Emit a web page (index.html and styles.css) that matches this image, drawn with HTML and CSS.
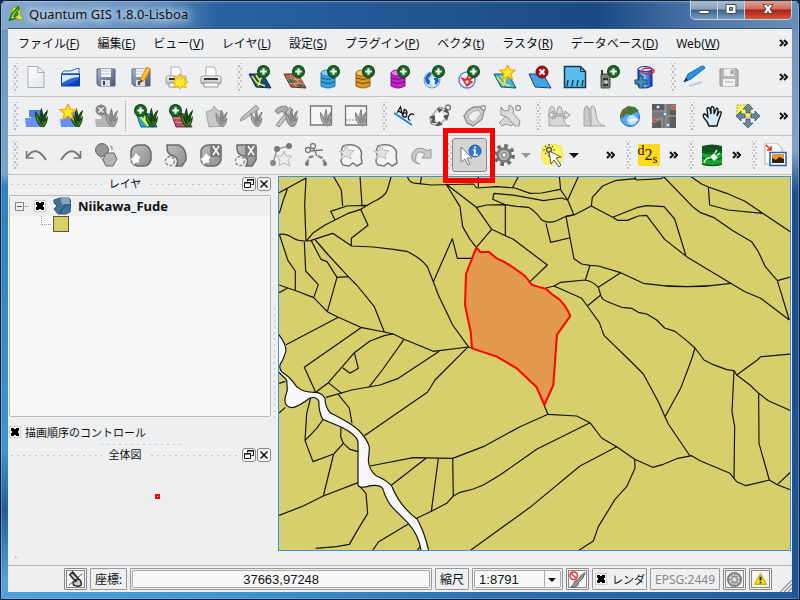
FILE: index.html
```html
<!DOCTYPE html>
<html lang="ja">
<head>
<meta charset="utf-8">
<title>Quantum GIS 1.8.0-Lisboa</title>
<link rel="stylesheet" href="styles.css">
</head>
<body>
<svg class="sprite" aria-hidden="true">
  <defs>
    <linearGradient id="g-floppy" x2="1" y2="1"><stop offset="0" stop-color="#a9b6d6"/><stop offset="1" stop-color="#4d5570"/></linearGradient>
    <linearGradient id="g-paper" x2="1" y2="1"><stop offset="0" stop-color="#fff"/><stop offset="1" stop-color="#dfe6ef"/></linearGradient>
    <linearGradient id="g-blue" x2="1" y2="0"><stop offset="0" stop-color="#0a3fc0"/><stop offset=".4" stop-color="#7ec4ff"/><stop offset="1" stop-color="#0a38b0"/></linearGradient>
    <linearGradient id="g-grey" x2="1" y2="1"><stop offset="0" stop-color="#bdbdbd"/><stop offset="1" stop-color="#8f8f8f"/></linearGradient>
    <radialGradient id="g-globe" cx=".6" cy=".65"><stop offset="0" stop-color="#fff"/><stop offset=".5" stop-color="#8ac8fa"/><stop offset="1" stop-color="#1e62c8"/></radialGradient>
    <linearGradient id="g-printer" x2="0" y2="1"><stop offset="0" stop-color="#fff"/><stop offset="1" stop-color="#b5b5b5"/></linearGradient>
  </defs>
  <symbol id="badge" viewBox="0 0 12 12"><circle cx="6" cy="6" r="5.500" fill="#1b6b24" stroke="#0d4413"/><path d="M6 3v6M3 6h6" stroke="#fff" stroke-width="2"/></symbol>
  <symbol id="star" viewBox="0 0 16 16"><path d="M8 .8l2 4.800 5.200.2-4 3.400 1.400 5.200L8 11.600l-4.600 2.800 1.400-5.200-4-3.400 5.200-.2z" fill="#ffee22" stroke="#f2a60c" stroke-width="1.200"/></symbol>
  <symbol id="grass" viewBox="0 0 12 18"><path d="M5 17Q0 12 .5 4Q4 9 5 13Q4 5 6 1Q7.500 7 7 12Q8 6 11.500 3Q10 8 8.500 13L11.500 9Q11 15 8 17.500Z" fill="#4f8a22" stroke="#123d0c"/><path d="M3 8l3 8M6 5v9M9 7l-2 9" stroke="#0d3d10" fill="none"/></symbol>
  <symbol id="grass-off" viewBox="0 0 12 18"><path d="M5 17Q0 12 .5 4Q4 9 5 13Q4 5 6 1Q7.500 7 7 12Q8 6 11.500 3Q10 8 8.500 13L11.500 9Q11 15 8 17.500Z" fill="#adadad" stroke="#808080"/><path d="M3 8l3 8M6 5v9M9 7l-2 9" stroke="#888" fill="none"/></symbol>
  <symbol id="floppy" viewBox="0 0 24 24"><path d="M3 4h18v17H5l-2-2z" fill="url(#g-floppy)" stroke="#59617a"/><path d="M7 4h10v8H7z" fill="#f4f6fb"/><path d="M7 6h10M7 9h10" stroke="#b9c4d8"/><path d="M7 15h9v6H7z" fill="#dce0e8"/><path d="M9 16h2v4H9z" fill="#3c4254"/></symbol>
  <symbol id="printer" viewBox="0 0 24 24"><path d="M7 12V2h8l2 3v7z" fill="#fff" stroke="#aaa"/><path d="M2 13q0-2 2-2h16q2 0 2 2v5q0 1-2 1H4q-2 0-2-1z" fill="url(#g-printer)" stroke="#999"/><path d="M5 14h14" stroke="#333" stroke-width="2"/><path d="M5 18h14v4H5z" fill="#f7f7f7" stroke="#999"/></symbol>

  <symbol id="i-new" viewBox="0 0 24 24"><path d="M4 1.500h10l6 6v15H4z" fill="url(#g-paper)" stroke="#a6adb5"/><path d="M14 1.500l6 6h-6z" fill="#fff" stroke="#a6adb5"/></symbol>
  <symbol id="i-open" viewBox="0 0 24 24"><path d="M3 8l2-2h6l9-3v6H3z" fill="#eaf2ff" stroke="#3567c4"/><path d="M2.500 9h18v12h-18z" fill="#2464dc" stroke="#0d3da8"/><path d="M3 10h17v2Q12 12 3 18z" fill="#d4ebff"/><path d="M4 21Q14 18 20 14v7z" fill="#0b3eb0"/></symbol>
  <symbol id="i-saveas" viewBox="0 0 24 24"><use href="#floppy"/><path d="M11 18l1-5 6-11 3.500 2-6 11z" fill="#ffc229" stroke="#e38610"/><path d="M11 18l.7-3.500 2.300 1.300z" fill="#704214"/></symbol>
  <symbol id="i-print-new" viewBox="0 0 24 24"><use href="#printer"/><path d="M16 9l1.500 4.500L22 11l-1.500 4.500 3.500 1.500-3.500 1.500 2 4.500-4.500-2-2 3-2-3-4.500 1.500 2-4-3-1.500 3-1.500-1.500-4 4 2z" fill="#ffea2a" stroke="#f5a510"/></symbol>
  <symbol id="i-vector" viewBox="0 0 24 24"><path d="M1 9l14 0 8 14-15-1z" fill="#174b80" stroke="#0c2c52"/><path d="M4 11l5 7 8 3M8 10l4 6-2 5M14 12l-3 4" stroke="#e8ee36" stroke-width="1.600" fill="none"/><use href="#badge" x="9" y="0" width="13" height="13"/></symbol>
  <symbol id="i-raster" viewBox="0 0 24 24"><path d="M1 9l14 0 8 14-15-1z" fill="#b0605d" stroke="#5e2c25"/><path d="M7 10l6 12M11 11l7 11M4 14l15 1M6 18l15 1" stroke="#d6a578" fill="none"/><path d="M5 14l5 .3 2 3.700-5-.2zM14 19l5 .3 2 3-5-.3z" fill="#397342"/><use href="#badge" x="9" y="0" width="13" height="13"/></symbol>
  <symbol id="i-postgis" viewBox="0 0 24 24"><path d="M3 8v13q7 4 14 0V8z" fill="#38a0dc" stroke="#1a76ae"/><ellipse cx="10" cy="8" rx="7" ry="3" fill="#86cdf2" stroke="#2586bd"/><path d="M3 13q7 3 14 0M3 17q7 3 14 0" stroke="#126094" fill="none"/><use href="#badge" x="9" y="0" width="13" height="13"/></symbol>
  <symbol id="i-spatialite" viewBox="0 0 24 24"><path d="M3 8v13q7 4 14 0V8z" fill="#d99626" stroke="#97600c"/><ellipse cx="10" cy="8" rx="7" ry="3" fill="#f1c372" stroke="#a26c12"/><path d="M3 13q7 3 14 0M3 17q7 3 14 0" stroke="#74480a" fill="none"/><use href="#badge" x="9" y="0" width="13" height="13"/></symbol>
  <symbol id="i-mssql" viewBox="0 0 24 24"><path d="M3 8v13q7 4 14 0V8z" fill="#c422c8" stroke="#870e8b"/><ellipse cx="10" cy="8" rx="7" ry="3" fill="#e47be6" stroke="#8d168f"/><path d="M3 13q7 3 14 0M3 17q7 3 14 0" stroke="#700c75" fill="none"/><use href="#badge" x="9" y="0" width="13" height="13"/></symbol>
  <symbol id="i-wms" viewBox="0 0 24 24"><circle cx="9" cy="15" r="8" fill="#bfe0fa" stroke="#6d9ccc"/><path d="M2 13q3-6 7-5l-2 4-2 1 2 3-1 4q-4-2-4-7zM11 13l4 0 1 3-3 4-2-3z" fill="#1f64b5"/><path d="M8 15l3 1-1 4" stroke="#fff" stroke-width="2" fill="none"/><use href="#badge" x="9" y="0" width="13" height="13"/></symbol>
  <symbol id="i-wfs" viewBox="0 0 24 24"><circle cx="9" cy="15" r="8" fill="#edf4ff" stroke="#5b84da" stroke-width="1.500"/><path d="M3 13l5 2 3-5M4 13l5 8 5-4-5-3 6-1M9 21l5-9" fill="none" stroke="#e52731" stroke-width="1.500"/><use href="#badge" x="9" y="0" width="13" height="13"/></symbol>
  <symbol id="i-newvector" viewBox="0 0 24 24"><path d="M1 9l14 0 8 14-15-1z" fill="#4cb2d8" stroke="#175377"/><path d="M4 12l5 6 8 3M8 11l4 5-2 5M14 12l-3 3" stroke="#e8ee36" stroke-width="1.600" fill="none"/><use href="#star" x="6" y="-1" width="17" height="17"/></symbol>
  <symbol id="i-remove" viewBox="0 0 24 24"><path d="M1 9l14 0 8 14-16-1z" fill="#42a4e2" stroke="#1d4468"/><circle cx="14" cy="7" r="6" fill="#a31420" stroke="#620810"/><path d="M11.500 4.500l5 5m0-5l-5 5" stroke="#fff" stroke-width="2"/></symbol>
  <symbol id="i-gpx" viewBox="0 0 24 24"><path d="M1.500 1.500h16l5 5v16h-21z" fill="#5bbdec" stroke="#17374b" stroke-width="1.500"/><path d="M17.500 1.500v5h5" fill="none" stroke="#17374b"/><path d="M5 15l-1 6M10 15l-1 6M15 15l-1 6M20 15l-1 6" stroke="#153d56" stroke-width="1.500"/></symbol>
  <symbol id="i-gps" viewBox="0 0 24 24"><rect x="3" y="9" width="9" height="14" rx="1" fill="#798379" stroke="#444"/><path d="M4 5v5M5 14h5M5 20h5" stroke="#333" stroke-width="2"/><circle cx="8" cy="17" r="1.500" fill="#cfd6cf"/><use href="#badge" x="9" y="0" width="13" height="13"/></symbol>
  <symbol id="i-oracle" viewBox="0 0 24 24"><path d="M5 4v17q7 4 14 0V4z" fill="url(#g-blue)" stroke="#092d95"/><ellipse cx="12" cy="4" rx="7" ry="2.500" fill="#cfe8ff" stroke="#0b3cac"/><ellipse cx="15" cy="6" rx="6" ry="3" fill="none" stroke="#ed1c24" stroke-width="1.500"/><path d="M6 11h4v4h4v4h-4v4H6v-4H2v-4h4z" fill="#478caf" stroke="#174f70"/></symbol>
  <symbol id="i-pencil" viewBox="0 0 24 24"><path d="M2 17l4-8L20 1q3 0 3 2L9 14z" fill="#2d8fe0" stroke="#1673bd"/><path d="M2 17l2-4 2 2z" fill="#123"/><path d="M7 21l13-4" stroke="#c4cbd1" stroke-width="2"/></symbol>
  <symbol id="i-save-off" viewBox="0 0 24 24"><path d="M3 4h17l1 2v15H3z" fill="#b5b5b5" stroke="#919191"/><path d="M7 4h10v7H7z" fill="#eee"/><path d="M6 14h12v7H6z" fill="#f2f2f2"/><path d="M14 5h2v4h-2zM8 17h8" stroke="#aaa" fill="#999"/></symbol>

  <symbol id="i-grass1" viewBox="0 0 24 24"><path d="M1 14h6V7h11l3 5v11H2z" fill="#6691f4"/><path d="M5 6h12v7H5z" fill="#4f80df"/><use href="#grass" x="11" y="4" width="13" height="19"/></symbol>
  <symbol id="i-grass2" viewBox="0 0 24 24"><path d="M1 15h6V8h11l3 5v10H2z" fill="#6691f4"/><use href="#grass" x="11" y="4" width="13" height="19"/><use href="#star" x="0" y="-1" width="18" height="18"/></symbol>
  <symbol id="i-grass3" viewBox="0 0 24 24"><path d="M1 15h6V10h11l3 4v9H2z" fill="#b6b6b6"/><use href="#grass-off" x="11" y="4" width="13" height="19"/><circle cx="7" cy="6" r="5.500" fill="#858585"/><path d="M4.500 3.500l5 5m0-5l-5 5" stroke="#eee" stroke-width="1.600"/></symbol>
  <symbol id="i-grass4" viewBox="0 0 24 24"><path d="M2 9l14 1 7 13H7z" fill="#29a7c7" stroke="#0f5f80"/><path d="M6 12l8 10M12 10l-2 7 5 2" stroke="#f1f23e" stroke-width="2" fill="none"/><use href="#grass" x="11" y="4" width="13" height="19"/><use href="#badge" x="0" y="0" width="13" height="13"/></symbol>
  <symbol id="i-grass5" viewBox="0 0 24 24"><path d="M2 9l14 1 7 13H7z" fill="#b94d68" stroke="#69364b"/><path d="M4 14l14 1M6 18l14 1" stroke="#e09277"/><use href="#grass" x="11" y="4" width="13" height="19"/><use href="#badge" x="0" y="0" width="13" height="13"/></symbol>
  <symbol id="i-grass6" viewBox="0 0 24 24"><path d="M2 8l6-2 2-4 3 4 6 2 1 14-15 1z" fill="#c8c8c8" stroke="#a5a5a5"/><use href="#grass-off" x="11" y="5" width="13" height="18"/></symbol>
  <symbol id="i-grass7" viewBox="0 0 24 24"><path d="M1 17l2-4L17 1l3 4L6 15z" fill="#bfbfbf" stroke="#929292"/><use href="#grass-off" x="11" y="5" width="13" height="18"/></symbol>
  <symbol id="i-grass8" viewBox="0 0 24 24"><path d="M1 7q2-5 11-5l3 3-3 1 5 6-3 2-6-7-4 3z" fill="#aaa" stroke="#858585"/><path d="M2 21L16 3l3 3L5 23z" fill="#c4c4c4" stroke="#8c8c8c"/><use href="#grass-off" x="11" y="4" width="13" height="19"/></symbol>
  <symbol id="i-grass9" viewBox="0 0 24 24"><path d="M1.500 2h21v19h-21z" fill="#f5f5f5" stroke="#777" stroke-width="1.300"/><use href="#grass-off" x="11" y="4" width="12" height="19"/></symbol>
  <symbol id="i-grass10" viewBox="0 0 24 24"><path d="M1.500 2h21v19h-21z" fill="#f5f5f5" stroke="#777" stroke-width="1.300"/><path d="M2 16h14" stroke="#888" stroke-dasharray="2 1"/><use href="#grass-off" x="11" y="4" width="12" height="19"/></symbol>
  <symbol id="i-tag1" viewBox="0 0 24 24"><circle cx="20" cy="3.500" r="2.500" fill="none" stroke="#777" stroke-width="1.300"/><path d="M2 14L11 3l8 2 2 6-10 11-8-2z" fill="#e2e2e2" stroke="#888"/><circle cx="11.500" cy="12.500" r="4.500" fill="#fff"/><path d="M9 4l6 1-4 4zM1 13l6-2v6zM21 10l-2 7-4-5zM7 22l4-5 4 4zM19 4l2 6-6-3zM3 19l1-4 5 4z" fill="#555"/></symbol>
  <symbol id="i-tag2" viewBox="0 0 24 24"><circle cx="20" cy="4" r="2.500" fill="none" stroke="#999" stroke-width="1.300"/><path d="M1 12Q7 1 17 3l4 4-2 8-9 7-6-3z" fill="#ccc" stroke="#909090" stroke-width="1.400"/><path d="M5 12q5-6 10-6l3 4-7 8-5-2z" fill="#f0f0f0" stroke="#aaa"/></symbol>
  <symbol id="i-tag3" viewBox="0 0 24 24"><circle cx="20" cy="4" r="2.500" fill="none" stroke="#999" stroke-width="1.300"/><path d="M1 19l8-8 6 2 3 5-5 4-5-2-4 2z" fill="#d5d5d5" stroke="#9a9a9a"/><path d="M3 3l3 4 5-1V1q6 2 4 8l7 8-1 5-4 0-8-9-6-2z" fill="#dcdcdc" stroke="#8f8f8f"/></symbol>
  <symbol id="i-hist1" viewBox="0 0 24 24"><path d="M2 22V6q3-8 6 0v9L11 3q4-3 5 8t7 11z" fill="#d7d7d7" stroke="#a2a2a2"/><path d="M1 11l5-4v3h12V7l5 4-5 4v-3H6v3z" fill="#e3e3e3" stroke="#8e8e8e"/></symbol>
  <symbol id="i-hist2" viewBox="0 0 24 24"><path d="M2 22V6q2-7 5-2l2 18z" fill="#c8c8c8" stroke="#a2a2a2"/><path d="M9 22V3q4-4 5 7t9 12z" fill="#dadada" stroke="#a2a2a2"/></symbol>
  <symbol id="i-earth" viewBox="0 0 24 24"><circle cx="13" cy="13" r="9.500" fill="#58a7f2" stroke="#276ac0"/><circle cx="15" cy="16" r="5" fill="#b9e2ff"/><path d="M3 12l2-6 6-4 7 1 4 4-5 2-3 2-5-1-3 4z" fill="#3e7936"/><path d="M3 12l4-7 5-2-2 4-4 2-1 5z" fill="#8b6237"/><path d="M13 17q4-3 8-1" stroke="#fff" stroke-width="2" fill="none"/></symbol>
  <symbol id="i-georef" viewBox="0 0 24 24"><path d="M0 0h24v24H0z" fill="#777"/><path d="M0 0h13v8H0zM18 6h6v18h-6zM0 17h10v7H0z" fill="#5e5e5e"/><path d="M0 7h13V0M14 0v24M0 17l10-3v10M14 12h10" fill="none" stroke="#949494" stroke-width="1.500"/><g fill="#fff" stroke="#5a8be0"><circle cx="6" cy="3" r="1.600"/><circle cx="13" cy="10" r="1.600"/><circle cx="16" cy="21" r="1.600"/></g><path d="M20 2h3v3h-3zM1 15h3v3H1z" fill="#e81818" stroke="#fbb" stroke-width=".5"/></symbol>
  <symbol id="i-hand" viewBox="0 0 24 24"><path d="M8 22q-1-4-5-8-2-4 1-4l3 3-1-8q1-3 3 0l1 5V4q1-3 3 0v6l2-5q2-2 2 1l-1 6 2-4q3-1 2 2l-3 8-1 4z" fill="#d3ecfb" stroke="#111" stroke-width="1.300"/></symbol>
  <symbol id="i-pan" viewBox="0 0 24 24"><path d="M1 1h14v12H1z" fill="#fff25b" stroke="#bfa927" stroke-dasharray="2 1"/><path d="M12 0l5 5h-3v4h-4V5H7zM24 12l-5 5v-3h-4v-4h4V7zM12 24l-5-5h3v-4h4v4h3zM0 12l5-5v3h4v4H5v3z" fill="#688a9f" stroke="#375567" stroke-width=".8"/></symbol>
  <symbol id="i-label" viewBox="0 0 24 24"><g fill="none" stroke="#111" stroke-width="1.300"><path d="M4 9l3.500-6 2 8M5 7l3.500 1.600M11.500 5l-1.800 7 2 1.200q3-.6 1.600-3.200q2.400-1.500-1.800-5M11.300 8.500l2 1M21 11q-3-2.500-5 1t1.500 4.500"/></g><path d="M1 9l18 12" stroke="#1f80ee" stroke-width="2"/></symbol>

  <symbol id="i-undo" viewBox="0 0 24 24"><path d="M3 14Q12 1 22 17" fill="none" stroke="#777" stroke-width="2"/><path d="M2.500 8v7h7" fill="none" stroke="#777" stroke-width="1.600"/></symbol>
  <symbol id="i-redo" viewBox="0 0 24 24"><path d="M21 14Q12 1 2 17" fill="none" stroke="#777" stroke-width="2"/><path d="M21.500 8v7h-7" fill="none" stroke="#777" stroke-width="1.600"/></symbol>
  <symbol id="i-simplify" viewBox="0 0 24 24"><circle cx="8" cy="7" r="6.500" fill="#969696" stroke="#686868"/><path d="M12 10h8l3 6-4 7h-7l-3-6z" fill="#b5b5b5" stroke="#686868"/><path d="M16 3q3 0 2 4M5 12l6 8" stroke="#777" fill="none"/></symbol>
  <symbol id="i-ring" viewBox="0 0 24 24"><path d="M2 8q1-5 7-6h7q6 3 6 9v6q-2 6-7 6H8q-6-2-6-7z" fill="url(#g-grey)" stroke="#6a6a6a" stroke-width="1.500"/><path d="M7 9l2 3 3 2-2 3 1 3-4 0-3 2-1-4-2-2 3-2z" fill="#fff" stroke="#999" stroke-width=".8"/></symbol>
  <symbol id="i-part" viewBox="0 0 24 24"><path d="M3 2h12q8 4 7 15l-4 6h-6q4-7-2-10Q2 12 3 2z" fill="url(#g-grey)" stroke="#6a6a6a" stroke-width="1.500"/><circle cx="6" cy="18" r="4.500" fill="#f2f2f2" stroke="#8a8a8a" stroke-width="1.500" stroke-dasharray="3 1.500"/></symbol>
  <symbol id="i-ringx" viewBox="0 0 24 24"><use href="#i-ring"/><rect x="11" y="1" width="12" height="13" rx="3" fill="#7b7b7b"/><path d="M14 3l6 9m0-9l-6 9" stroke="#fff" stroke-width="1.500"/></symbol>
  <symbol id="i-partx" viewBox="0 0 24 24"><use href="#i-part"/><rect x="11" y="1" width="12" height="13" rx="3" fill="#7b7b7b"/><path d="M14 3l6 9m0-9l-6 9" stroke="#fff" stroke-width="1.500"/></symbol>
  <symbol id="i-reshape" viewBox="0 0 24 24"><path d="M4 20L8 6l12-3" stroke="#999" stroke-width="1.500" fill="none"/><circle cx="8" cy="6" r="3" fill="#777"/><circle cx="20" cy="3" r="3" fill="#777"/><circle cx="4" cy="20" r="3" fill="#888"/><path d="M15 8l2 5 6 0-4 4 2 6-6-3-5 3 1-6-4-4 6 0z" fill="#ededed" stroke="#b5b5b5"/></symbol>
  <symbol id="i-split" viewBox="0 0 24 24"><path d="M2 21l4-7 5-1M14 13l4 2 4 6" fill="none" stroke="#888" stroke-width="2.500" stroke-dasharray="5 1.500"/><path d="M5 8l14-1M9 4l4 9" stroke="#777" stroke-width="1.500"/><circle cx="4" cy="7" r="2.500" fill="#eee" stroke="#777" stroke-width="1.300"/><circle cx="9" cy="3" r="2.500" fill="#eee" stroke="#777" stroke-width="1.300"/><circle cx="21" cy="21" r="2" fill="#777"/><circle cx="3" cy="21" r="2" fill="#777"/></symbol>
  <symbol id="i-merge" viewBox="0 0 24 24"><path d="M4 3q9-3 15 1 5 4 3 9l1 7-5 3-4-3-4 3-6-1q-4-4 0-8-3-5 0-11z" fill="#f4f4f4" stroke="#777" stroke-width="1.500"/><path d="M7 2l2 5 6 1-4 3 1 5-5-3-5 3 2-5-4-3h5z" fill="#e3e3e3" stroke="#bbb"/></symbol>
  <symbol id="i-rotate" viewBox="0 0 24 24"><path d="M11 21Q1 20 3 11 8 1 19 8l3-2v9h-9l3-4Q9 6 7 13t4 8z" fill="#c9c9c9" stroke="#999"/></symbol>
  <symbol id="i-identify" viewBox="0 0 24 24"><circle cx="17" cy="8" r="6" fill="#2f79cc" stroke="#1b56a4"/><path d="M15 7h2v5m-2 0h5M17 3.500v2" stroke="#fff" stroke-width="1.700" fill="none"/><path d="M3 4v15l4-3 3 6 2-1-3-6h5z" fill="#fff" stroke="#777"/></symbol>
  <symbol id="i-gear" viewBox="0 0 24 24"><circle cx="12" cy="12" r="9" fill="none" stroke="#6a6a6a" stroke-width="4" stroke-dasharray="3.500 3.569"/><circle cx="12" cy="12" r="6.500" fill="#b5b5b5" stroke="#777" stroke-width="2.500"/><circle cx="12" cy="12" r="2.500" fill="#eee" stroke="#6e6e6e"/></symbol>
  <symbol id="i-select" viewBox="0 0 24 24"><path d="M3 3l9-2 9 2 2 10-3 8-15 0-4-8z" fill="#fff25f" stroke="#f2e648"/><circle cx="9" cy="7" r="2.500" fill="#eee06a" stroke="#555" stroke-width="1.300"/><path d="M9 1v2M9 11v3M3 7h2M13 7h2M5 3l1 1M13 3l-1 1M5 11l1-1" stroke="#555" stroke-width="1.200"/><path d="M9 8l12 6-5 1 5 7-2 2-5-7-3 4z" fill="#fff" stroke="#555"/></symbol>
  <symbol id="i-green" viewBox="0 0 24 24"><path d="M2 3v18q10 3 20 0V3z" fill="#12a832"/><path d="M2 3q10-3 20 0v5q-10 3-20 0z" fill="#144f20"/><path d="M2 9q10 3 20 0M2 15q10 3 20 0M2 21q10 3 20 0" stroke="#06601c" stroke-width="1.500" fill="none"/><path d="M10 14l4-4 4 5-4 3z" fill="#eee"/><path d="M10 15q-5 0-6 5M15 10l2-3M17 12l3-2" fill="none" stroke="#dff5d0" stroke-width="1.500"/></symbol>
  <symbol id="i-image" viewBox="0 0 24 24"><path d="M2 0h12l5 5v16H2z" fill="#fff" stroke="#a7adb4"/><path d="M3 2l5 5m0-4v4H4" fill="none" stroke="#e62222" stroke-width="1.500"/><path d="M7 9.500h16v13H7z" fill="#fff" stroke="#1e63c6" stroke-width="1.500"/><path d="M9 11h12v9H9z" fill="#e59a22"/><path d="M9 20v-5l4 2 3-3 5 2v4z" fill="#332009"/></symbol>
  <symbol id="i-float" viewBox="0 0 12 12"><path d="M4.500 3.500v-2h6v5h-2M4.500 2h6M1.500 4.500h6v5h-6zM1.500 5h6" fill="none" stroke="#111"/></symbol>
  <symbol id="i-close" viewBox="0 0 12 12"><path d="M2.500 2.500l7 7m0-7l-7 7" stroke="#111" stroke-width="1.500"/></symbol>
</svg>

<main class="window">
  <header class="titlebar">
    <svg class="logo" viewBox="0 0 16 16"><path d="M5 2q5-3 8 0l-1 6 3 5-4 1-2-2-5 2q-3-5 1-12z" fill="#d8e746" stroke="#8ba32a"/><path d="M1 15l3-7 6-7 1 2-5 7q3 1 4-3M2 14l6-2" fill="none" stroke="#187519" stroke-width="1.500"/></svg>
    <h1>Quantum GIS 1.8.0-Lisboa</h1>
    <div class="controls">
      <button aria-label="最小化"><svg viewBox="0 0 16 12"><path d="M3 7.500h10v3H3z" fill="#fff" stroke="#444c5c"/></svg></button>
      <button aria-label="最大化"><svg viewBox="0 0 16 12"><path d="M3 1.500h10v9H3zM6.500 4.500v3h3v-3z" fill="#fff" fill-rule="evenodd" stroke="#444c5c"/></svg></button>
      <button class="exit" aria-label="閉じる"><svg viewBox="0 0 16 12"><path d="M3 1.500h3.500L8 3.500l1.500-2H13L10 6l3 4.500H9.500L8 8.500l-1.500 2H3L6 6z" fill="#fff" stroke="#5d3a40"/></svg></button>
    </div>
  </header>

  <div class="client">
    <nav class="menubar">
      <button>ファイル(<u>F</u>)</button><button>編集(<u>E</u>)</button><button>ビュー(<u>V</u>)</button><button>レイヤ(<u>L</u>)</button><button>設定(<u>S</u>)</button><button>プラグイン(<u>P</u>)</button><button>ベクタ(<u>t</u>)</button><button>ラスタ(<u>R</u>)</button><button>データベース(<u>D</u>)</button><button>Web(<u>W</u>)</button>
      <button class="more end" aria-label="その他"><svg viewBox="0 0 9 8"><path d="M1 1l3 3-3 3M5 1l3 3-3 3"/></svg></button>
    </nav>

    <div class="toolbar">
      <i class="grip"></i>
      <button class="tool" aria-label="新規"><svg><use href="#i-new"/></svg></button>
      <button class="tool" aria-label="開く"><svg><use href="#i-open"/></svg></button>
      <button class="tool" aria-label="保存"><svg><use href="#floppy"/></svg></button>
      <button class="tool" aria-label="名前を付けて保存"><svg><use href="#i-saveas"/></svg></button>
      <button class="tool" aria-label="新規印刷"><svg><use href="#i-print-new"/></svg></button>
      <button class="tool" aria-label="印刷"><svg><use href="#printer"/></svg></button>
      <i class="grip"></i>
      <button class="tool" aria-label="ベクタ追加"><svg><use href="#i-vector"/></svg></button>
      <button class="tool" aria-label="ラスタ追加"><svg><use href="#i-raster"/></svg></button>
      <button class="tool" aria-label="PostGIS追加"><svg><use href="#i-postgis"/></svg></button>
      <button class="tool" aria-label="SpatiaLite追加"><svg><use href="#i-spatialite"/></svg></button>
      <button class="tool" aria-label="MSSQL追加"><svg><use href="#i-mssql"/></svg></button>
      <button class="tool" aria-label="WMS追加"><svg><use href="#i-wms"/></svg></button>
      <button class="tool" aria-label="WFS追加"><svg><use href="#i-wfs"/></svg></button>
      <button class="tool" aria-label="新規レイヤ"><svg><use href="#i-newvector"/></svg></button>
      <button class="tool" aria-label="レイヤ削除"><svg><use href="#i-remove"/></svg></button>
      <button class="tool" aria-label="テキスト"><svg><use href="#i-gpx"/></svg></button>
      <button class="tool" aria-label="GPS"><svg><use href="#i-gps"/></svg></button>
      <button class="tool" aria-label="Oracle"><svg><use href="#i-oracle"/></svg></button>
      <i class="grip"></i>
      <button class="tool" aria-label="編集切替"><svg><use href="#i-pencil"/></svg></button>
      <button class="tool" aria-label="編集保存"><svg><use href="#i-save-off"/></svg></button>
      <button class="more end" aria-label="その他"><svg viewBox="0 0 9 8"><path d="M1 1l3 3-3 3M5 1l3 3-3 3"/></svg></button>
    </div>

    <div class="toolbar">
      <i class="grip"></i>
      <button class="tool" aria-label="マップセットを開く"><svg><use href="#i-grass1"/></svg></button>
      <button class="tool" aria-label="新規マップセット"><svg><use href="#i-grass2"/></svg></button>
      <button class="tool" aria-label="マップセットを閉じる"><svg><use href="#i-grass3"/></svg></button>
      <i class="rule"></i>
      <button class="tool" aria-label="GRASSベクタ追加"><svg><use href="#i-grass4"/></svg></button>
      <button class="tool" aria-label="GRASSラスタ追加"><svg><use href="#i-grass5"/></svg></button>
      <button class="tool" aria-label="GRASSベクタ作成"><svg><use href="#i-grass6"/></svg></button>
      <button class="tool" aria-label="GRASS編集"><svg><use href="#i-grass7"/></svg></button>
      <button class="tool" aria-label="GRASSツール"><svg><use href="#i-grass8"/></svg></button>
      <button class="tool" aria-label="GRASS領域表示"><svg><use href="#i-grass9"/></svg></button>
      <button class="tool" aria-label="GRASS領域編集"><svg><use href="#i-grass10"/></svg></button>
      <i class="grip"></i>
      <button class="tool" aria-label="ラベル"><svg><use href="#i-label"/></svg></button>
      <button class="tool" aria-label="ラベル移動"><svg><use href="#i-tag1"/></svg></button>
      <button class="tool" aria-label="ラベル回転"><svg><use href="#i-tag2"/></svg></button>
      <button class="tool" aria-label="ラベル変更"><svg><use href="#i-tag3"/></svg></button>
      <i class="grip"></i>
      <button class="tool" aria-label="ヒストグラム伸長"><svg><use href="#i-hist1"/></svg></button>
      <button class="tool" aria-label="ヒストグラム"><svg><use href="#i-hist2"/></svg></button>
      <button class="tool" aria-label="地球"><svg><use href="#i-earth"/></svg></button>
      <button class="tool" aria-label="ジオリファレンサ"><svg><use href="#i-georef"/></svg></button>
      <i class="grip"></i>
      <button class="tool" aria-label="移動"><svg><use href="#i-hand"/></svg></button>
      <button class="tool" aria-label="選択部分に移動"><svg><use href="#i-pan"/></svg></button>
      <button class="more end" aria-label="その他"><svg viewBox="0 0 9 8"><path d="M1 1l3 3-3 3M5 1l3 3-3 3"/></svg></button>
    </div>

    <div class="toolbar">
      <i class="grip"></i>
      <button class="tool" aria-label="元に戻す"><svg><use href="#i-undo"/></svg></button>
      <button class="tool" aria-label="やり直し"><svg><use href="#i-redo"/></svg></button>
      <button class="tool" aria-label="簡素化"><svg><use href="#i-simplify"/></svg></button>
      <button class="tool" aria-label="リング追加"><svg><use href="#i-ring"/></svg></button>
      <button class="tool" aria-label="部分追加"><svg><use href="#i-part"/></svg></button>
      <button class="tool" aria-label="リング削除"><svg><use href="#i-ringx"/></svg></button>
      <button class="tool" aria-label="部分削除"><svg><use href="#i-partx"/></svg></button>
      <button class="tool" aria-label="変形"><svg><use href="#i-reshape"/></svg></button>
      <button class="tool" aria-label="分割"><svg><use href="#i-split"/></svg></button>
      <button class="tool" aria-label="結合"><svg><use href="#i-merge"/></svg></button>
      <button class="tool" aria-label="属性結合"><svg><use href="#i-merge"/></svg></button>
      <button class="tool" aria-label="シンボル回転"><svg><use href="#i-rotate"/></svg></button>
      <i class="grip"></i>
      <span class="marked"><button class="tool pressed" aria-label="地物情報表示"><svg><use href="#i-identify"/></svg></button></span>
      <button class="tool drop off" aria-label="アクション"><svg><use href="#i-gear"/></svg></button>
      <button class="tool drop" aria-label="選択"><svg><use href="#i-select"/></svg></button>
      <button class="more gap" aria-label="その他"><svg viewBox="0 0 9 8"><path d="M1 1l3 3-3 3M5 1l3 3-3 3"/></svg></button>
      <i class="grip"></i>
      <button class="tool"><span class="d2s">d<sub>2</sub><sub class="low">s</sub></span></button>
      <button class="more" aria-label="その他"><svg viewBox="0 0 9 8"><path d="M1 1l3 3-3 3M5 1l3 3-3 3"/></svg></button>
      <i class="grip"></i>
      <button class="tool" aria-label="データベース接続"><svg><use href="#i-green"/></svg></button>
      <button class="more" aria-label="その他"><svg viewBox="0 0 9 8"><path d="M1 1l3 3-3 3M5 1l3 3-3 3"/></svg></button>
      <i class="grip"></i>
      <button class="tool" aria-label="画像"><svg><use href="#i-image"/></svg></button>
    </div>

    <div class="workspace">
      <aside class="docks">
        <div class="dock-title"><i class="dots"></i><h2>レイヤ</h2><i class="dots"></i><button aria-label="分離"><svg><use href="#i-float"/></svg></button><button aria-label="閉じる"><svg><use href="#i-close"/></svg></button></div>
        <div class="tree">
          <div class="layer">
            <button class="fold" aria-label="折りたたむ"></button><i class="twig"></i>
            <input type="checkbox" id="layer" checked>
            <label for="layer"><svg viewBox="0 0 18 18"><path d="M1 3l6-2 9 0 2 3-1 11-4 2-8 0-4-5 3-3-3-3z" fill="#4a7194" stroke="#345672"/><path d="M8 1h8l1 6-7 1-2-3z" fill="#82a8c6"/><path d="M11 8h6M11 8v3l-3 2v4" stroke="#294660" fill="none"/></svg><b>Niikawa_Fude</b></label>
          </div>
          <div class="legend"><i class="branch"></i><i class="swatch"></i></div>
        </div>
        <label class="order"><input type="checkbox" checked>描画順序のコントロール</label>
        <i class="split-h"></i>
        <div class="dock-title"><i class="dots"></i><h2>全体図</h2><i class="dots"></i><button aria-label="分離"><svg><use href="#i-float"/></svg></button><button aria-label="閉じる"><svg><use href="#i-close"/></svg></button></div>
        <div class="overview"><i class="extent"></i></div>
      </aside>
      <div class="split-v"><i></i></div>
      <svg class="map" viewBox="27 21 1533 1119" preserveAspectRatio="xMinYMin slice">
        <path d="M0 0h2400v1800H0z" fill="#d6cf6b"/>
        <g class="parcel">
          <path d="M27 68L108 24L104 105L108 212M52 57L40 90L28 130M28 193Q50 190 70 205Q85 214 108 213L122 212Q155 200 188 190L245 228L310 231L370 238L410 244Q450 262 472 290L490 335L505 375L548 465L595 530"/>
          <path d="M110 212L130 188L165 165L195 150L235 130L272 118L310 95Q345 80 352 60L364 18M190 18L214 60L218 108M195 150L182 124L230 108L290 106M270 18L276 106M272 118L294 166L244 205V228"/>
          <path d="M28 193L54 272L76 303V362M103 216L107 303L145 344L131 383M124 212L153 268L171 275L201 322L172 425M136 210L175 255L235 320L260 345L313 410L343 486M201 322L235 320"/>
          <path d="M27 345L80 363L131 383L172 425L205 442L272 472L343 486L370 492L402 508L490 544L595 531L606 534M27 368L52 355M205 442L48 524M275 472L103 592L137 667"/>
          <path d="M370 492L345 496L300 513L253 548L215 592L175 638L137 667M253 548L265 595L240 610L218 593M402 508L337 600L298 650M508 544L468 570L385 625L330 645L245 660L168 682M595 530L525 600L495 630L473 666L283 797"/>
          <path d="M490 335L547 206L562 265H606M412 18Q416 40 440 40L485 45L610 42L620 54L680 50L735 54L780 70L815 69L870 58M455 18L451 40M528 42L570 110L578 170L600 208L619 232M528 42L619 112L665 178L730 208L832 285L780 335"/>
          <path d="M619 112L650 105L706 104V197M665 178L621 230M706 104L740 109L775 112Q795 122 815 150Q835 162 860 152L890 138L912 134M625 18V52M746 18L727 54M706 104L668 88L672 70L735 76L820 92L875 84L893 90"/>
          <path d="M834 733L750 770L640 830L548 865L430 863L300 888M960 758L800 838L750 873L690 915L640 945L610 957L570 967L550 978L530 1000L484 1024L440 1045M1040 830L930 888L780 1012L600 1142"/>
          <path d="M548 865L550 978M505 865L484 1024M468 865L362 947M27 640L46 634M27 729L46 712M175 638L215 670M122 684L110 730L105 812L129 875L191 852L220 820M158 750L140 775L105 812M205 674L238 714L246 760"/>
          <path d="M213 772L212 800L220 820L240 838L264 845M191 852L160 978M27 1036L95 1010L160 978L264 938M270 950L288 970L293 1030L260 1085L238 1123L200 1130L137 1135M415 1062L325 1116L308 1142M452 1128L441 1142"/>
        </g>
        <g class="parcel" transform="translate(780 0)">
          <path d="M88 18L92 60L113 90L132 135M146 18L113 90M108 140L132 135L184 108L187 82L218 48L255 32L315 26L322 30L395 26L402 18M48 160L62 217L118 204M108 140L120 204L132 266L155 282L180 286L205 288L272 308L340 340Q470 360 602 340"/>
          <path d="M184 108L248 142L320 113L350 107L402 110L434 147L468 258M248 142L262 151H292L325 138L350 136L404 208L470 260L602 340L645 365L692 385L778 450M402 21L490 112L510 127L550 142L610 183L665 215L685 245L706 290L742 332L778 450M742 332L782 321"/>
          <path d="M480 18L515 42L535 51L590 70L645 94L698 130L782 186M535 51L539 105L595 120L698 130M180 286L166 330M272 308L205 352M212 375L172 408M314 26L318 18"/>
          <path d="M48 354L72 348L92 337L166 330Q190 335 205 352L212 375Q215 390 240 398L275 412L305 415L325 427L350 432L380 450L404 474L435 484L470 512L495 534L522 570L550 584L590 599L612 602L620 615L660 645L686 670L715 692L782 722"/>
          <path d="M72 348L155 385L172 408L208 458L222 496L298 570L340 612L385 695L405 740L415 762L480 858M495 534L484 570L452 655L405 740M620 615L682 570L692 560L782 552"/>
          <path d="M612 602L606 725L614 770L612 925M686 670L687 820L718 930M42 705L54 733L140 738L180 758L215 804L260 830L314 868L368 892L400 883L440 866L485 857L510 872L600 910L620 935L648 947L718 930L742 944L782 960M742 944L782 906M314 868L315 895L290 950L255 988L205 1070L190 1113L145 1142"/>
        </g>
        <path class="river" d="M20 485Q52 525 47 545Q40 570 32 580Q25 595 36 606Q60 620 80 650Q100 668 137 667Q155 668 165 685Q165 710 180 728Q245 760 265 780Q290 805 298 830Q298 845 295 870Q297 900 318 917Q350 930 365 948Q390 1010 442 1048Q465 1090 478 1150H454Q450 1100 415 1060L370 1015Q350 995 338 955Q325 940 290 950Q268 955 264 945V815Q260 795 215 772L158 748Q145 720 147 695Q140 678 120 684Q85 710 68 713Q42 712 45 685L52 660L50 630L20 600Z"/>
        <path class="picked" d="M619 232L632 247L656 245L680 265L700 274L732 294L765 318L785 344L810 352L828 356L845 372L868 388Q890 410 901 438L861 494L850 645L823 705L800 652L740 595L680 560L606 535L602 485L585 405L588 312Z"/>
      </svg>
    </div>
    <div class="foot-dock"><i></i></div>

    <footer class="status">
      <button class="cell sq" aria-label="停止"><svg viewBox="0 0 18 18"><path d="M3 4l3-3 6 7-3 3zM9 10q5-3 6 2t-5 4-2-6z" fill="#ccc" stroke="#222" stroke-width="1.500"/><path d="M2 15L16 3M6 3l5 5" stroke="#555"/></svg></button>
      <label class="cell" for="coord">座標:</label>
      <span class="cell field"><input id="coord" value="37663,97248"></span>
      <label class="cell" for="scale">縮尺</label>
      <span class="cell combo"><select id="scale"><option>1:8791</option></select></span>
      <button class="cell sq" aria-label="描画停止"><svg viewBox="0 0 18 18"><path d="M17 2q-4 1-7 7l-4 2q-1 4-4 6 8 1 8-5 5-3 7-10z" fill="#999" stroke="#555"/><circle cx="5" cy="5" r="4" fill="none" stroke="#e03131" stroke-width="1.500"/><path d="M2 2l6 6" stroke="#e03131" stroke-width="1.500"/></svg></button>
      <label class="cell render"><input type="checkbox" checked>レンダ</label>
      <span class="cell epsg">EPSG:2449</span>
      <button class="cell sq" aria-label="CRS"><svg viewBox="0 0 18 18"><circle cx="9" cy="9" r="7" fill="#ccc" stroke="#7b7b7b" stroke-width="2"/><path d="M9 1v16M1 9h16M5 5q4 3 8 0M5 13q4-3 8 0" stroke="#888" fill="none"/><circle cx="9" cy="9" r="3" fill="#ddd" stroke="#777"/></svg></button>
      <button class="cell sq" aria-label="警告"><svg viewBox="0 0 18 18"><path d="M9 3l6 11H3z" fill="#ffee00" stroke="#c5b500" stroke-linejoin="round" stroke-width="1.500"/><path d="M9 6v4M9 11.500v1.500" stroke="#111" stroke-width="2"/></svg></button>
      <svg class="resize" viewBox="0 0 12 12"><path d="M0 12L12 0M4 12l8-8M8 12l4-4" stroke="#8b8b8b" stroke-width="1.200"/></svg>
    </footer>
  </div>
</main>
</body>
</html>
```
FILE: styles.css
```css
* { box-sizing: border-box; }
body { margin: 0; background: #10233e; }
body, button, input, select {
  font-family: "Noto Sans", "Noto Sans CJK JP", sans-serif;
  font-size: 12px;
  color: #111;
}
button { margin: 0; padding: 0; border: 0; background: none; }
h1, h2 { margin: 0; font-weight: 400; }
i { display: block; flex: none; }
.sprite { position: absolute; width: 0; height: 0; }

.window {
  display: flex;
  flex-direction: column;
  min-height: 100vh;
  padding: 0 8px 8px;
  border-radius: 6px 6px 2px 2px;
  background:
    linear-gradient(#ffffff33, #ffffff00 4px),
    linear-gradient(90deg, #86a9cd, #5c8cbf 20%, #2a62a0 27%, #1b4a86 75%, #4d78a8 88%, #6a8fb8) 0 0 / 100% 30px no-repeat,
    linear-gradient(#6f97c2, #7ba3cc 24%, #2b82c0 26%, #3f94cf 70%, #1f5f9f 80%, #55a3dd 92%, #3d92d2) 0 30px / 8px 100% no-repeat,
    linear-gradient(#6f95bf, #7fa3cb 20%, #1c4f8b 27%, #1d5593) right 30px / 8px 100% no-repeat,
    linear-gradient(90deg, #4fa0dc, #3f93d3 30%, #2a71b4 60%, #1f5d9f);
  box-shadow: inset 0 0 0 1px #0b1c33, inset 0 0 0 2px #a6c6e466;
}
.titlebar { display: flex; height: 28px; align-items: center; }
.logo { width: 16px; height: 16px; }
.titlebar h1 {
  margin-left: 5px;
  font-size: 13px;
  text-shadow: 0 0 8px #dbe9f7, 0 0 8px #dbe9f7, 0 0 12px #dbe9f7;
}
.controls {
  display: flex;
  align-self: flex-start;
  height: 20px;
  margin-left: auto;
  border: 1px solid #c3d2e2;
  border-top-color: #25364d;
  border-radius: 0 0 5px 5px;
  overflow: hidden;
}
.controls button {
  width: 27px;
  border-right: 1px solid #c3d2e2;
  background: linear-gradient(#a9bcd0, #8ba2bd 45%, #3d618b 50%, #7699bd);
}
.controls .exit {
  width: 46px;
  border: 0;
  background: linear-gradient(#e0a093, #cc6c5d 45%, #a92211 50%, #d5553c);
}
.controls svg { width: 16px; height: 12px; }

.client {
  display: flex;
  flex: 1;
  flex-direction: column;
  border-top: 1px solid #40546c;
  background: #eeeff1;
}
.menubar { display: flex; height: 28px; align-items: center; gap: 18px; padding-left: 10px; }
.menubar button { white-space: nowrap; }
.more { display: grid; flex: none; width: 14px; height: 20px; place-items: center; }
.more svg { width: 9px; height: 8px; fill: none; stroke: #111; stroke-width: 2; }
.end { margin-left: auto; margin-right: 2px; }
.gap { margin-left: 20px; }

.toolbar { display: flex; height: 39px; align-items: center; border-top: 1px solid #c3c1bd; }
.grip {
  width: 5px;
  height: 28px;
  margin-left: 9px;
  background:
    radial-gradient(circle, #bdbdbd 1px, transparent 1px) 0 0 / 4px 6px,
    radial-gradient(circle, #c8c8c8 1px, transparent 1px) 2px 3px / 4px 6px;
}
.grip:first-child { margin-left: 5px; }
.rule { width: 1px; height: 30px; margin: 0 2px; background: #bbb; }
.tool { display: grid; flex: none; width: 35px; height: 34px; place-items: center; }
.tool svg { width: 24px; height: 24px; }
.pressed { border: 1px solid #888; border-radius: 3px; background: #d3d4d5; }
.marked { position: relative; }
.marked::after {
  content: "";
  position: absolute;
  inset: -10px -8px -11px -9px;
  border: 5px solid #f00;
  pointer-events: none;
}
.drop {
  display: flex;
  width: 48px;
  align-items: center;
  justify-content: center;
  gap: 5px;
}
.drop::after { content: ""; border: 5px solid transparent; border-top-color: #111; border-bottom: 0; }
.off::after { border-top-color: #999; }
.d2s {
  width: 22px;
  height: 22px;
  background: #ffd91a;
  font: 14px/14px "Liberation Serif", serif;
  text-align: left;
  white-space: nowrap;
}
.d2s sub { font-size: 16px; line-height: 0; vertical-align: -5px; }
.d2s .low { font-size: 13px; vertical-align: -8px; }

.workspace {
  display: flex;
  flex: 1;
  min-height: 0;
  padding-top: 1px;
  border-top: 1px solid #c3c1bd;
}
.docks { display: flex; flex-direction: column; width: 264px; padding: 0 1px; }
.dock-title { display: flex; height: 16px; align-items: center; gap: 1px; }
.dock-title h2 { padding: 0 6px; font-size: 11px; line-height: 16px; }
.dots {
  flex: 1;
  height: 5px;
  background: radial-gradient(circle, #c4c4c4 1px, transparent 1px) 0 0 / 6px 5px;
}
.dock-title button {
  display: grid;
  width: 14px;
  height: 14px;
  place-items: center;
  border: 1px solid #888;
  border-radius: 3px;
  background: #f7f7f7;
}
.dock-title svg { width: 12px; height: 12px; }
.tree {
  flex: 1;
  margin-top: 3px;
  border: 1px solid #bbb7b2;
  border-radius: 2px;
  background: #f8f8f8;
}
.layer { display: flex; height: 20px; align-items: center; padding-left: 5px; background: #eeeff1; }
.fold { width: 9px; height: 9px; border: 1px solid #888; background: linear-gradient(#555, #555) center / 5px 1px no-repeat; }
.twig { width: 4px; margin: 0 5px 0 1px; border-top: 1px dotted #999; }
.layer label { display: flex; align-items: center; gap: 7px; margin-left: 7px; }
.layer svg { width: 18px; height: 18px; }
.layer b { font-size: 13px; line-height: 18px; }
input[type="checkbox"] {
  flex: none;
  appearance: none;
  width: 12px;
  height: 12px;
  margin: 0;
  border: 1px solid #ccc;
  background: #fff;
}
input[type="checkbox"]:checked {
  background:
    linear-gradient(45deg, transparent 35%, #000 35% 65%, transparent 65%) center / 8px 8px no-repeat,
    linear-gradient(-45deg, transparent 35%, #000 35% 65%, transparent 65%) center / 8px 8px no-repeat,
    #fff;
}
.legend { display: flex; padding-left: 31px; }
.branch { width: 10px; height: 9px; margin-right: 2px; border: dotted #999; border-width: 0 0 1px 1px; }
.swatch { width: 16px; height: 16px; border: 1px solid #5c572c; background: #d6cf6b; }
.order { display: flex; height: 25px; align-items: center; gap: 4px; padding-top: 4px; font-size: 11px; }
.split-h {
  align-self: center;
  width: 82px;
  height: 5px;
  background: radial-gradient(circle, #c4c4c4 1px, transparent 1px) 0 0 / 6px 5px;
}
.overview { display: grid; height: 89px; padding: 0 0 22px 34px; place-items: center; }
.extent { width: 5px; height: 5px; border: 2px solid #f00; background: #fff; }
.split-v { display: flex; width: 6px; align-items: center; }
.split-v i {
  width: 5px;
  height: 116px;
  background: radial-gradient(circle, #c4c4c4 1px, transparent 1px) 0 0 / 5px 6px;
}
.map {
  flex: 1;
  min-width: 0;
  height: 375px;
  min-height: 100%;
  margin-right: 1px;
  border: 1px solid #3c8fe8;
}
.parcel { fill: none; stroke: #111; stroke-width: 3.5; stroke-linejoin: round; }
.river { fill: #f8f8f8; stroke: #111; stroke-width: 3.5; }
.picked { fill: #e3994e; stroke: #f00; stroke-width: 6; stroke-linejoin: round; }
.foot-dock { height: 13px; padding: 3px 5px; }
.foot-dock i { width: 5px; height: 5px; background: radial-gradient(circle, #bbb 1px, transparent 1px); }

.status {
  display: flex;
  height: 27px;
  align-items: center;
  gap: 3px;
  padding-left: 56px;
  border-top: 1px solid #b9b7b3;
}
.cell {
  display: flex;
  flex: none;
  height: 22px;
  align-items: center;
  padding: 0 4px;
  border: 1px solid #999;
  border-radius: 1px;
  white-space: nowrap;
}
.sq { width: 23px; padding: 0; justify-content: center; border: 3px double #888; background: #f4f4f4; }
.sq svg { width: 17px; height: 17px; }
.field { flex: 1; padding: 1px; }
.field input {
  width: 100%;
  height: 18px;
  padding: 0;
  border: 1px solid #aaa;
  border-radius: 2px;
  background: #f8f8f8;
  text-align: center;
}
.field input, .combo select { font-family: "Liberation Sans", sans-serif; font-size: 13px; }
.combo { position: relative; width: 91px; padding: 1px; }
.combo select {
  appearance: none;
  width: 100%;
  height: 18px;
  padding: 0 4px;
  border: 1px solid #aaa;
  border-radius: 2px;
  background: linear-gradient(#aaa, #aaa) right 15px top / 1px 100% no-repeat, #f8f8f8;
}
.combo::after {
  content: "";
  position: absolute;
  right: 6px;
  top: 9px;
  border: 4px solid transparent;
  border-top-color: #111;
  border-bottom: 0;
  pointer-events: none;
}
.render { gap: 5px; padding: 0 1px 0 2px; font-size: 11px; }
.epsg { color: #888; }
.resize { width: 12px; height: 12px; margin-left: 5px; align-self: flex-end; }
```
